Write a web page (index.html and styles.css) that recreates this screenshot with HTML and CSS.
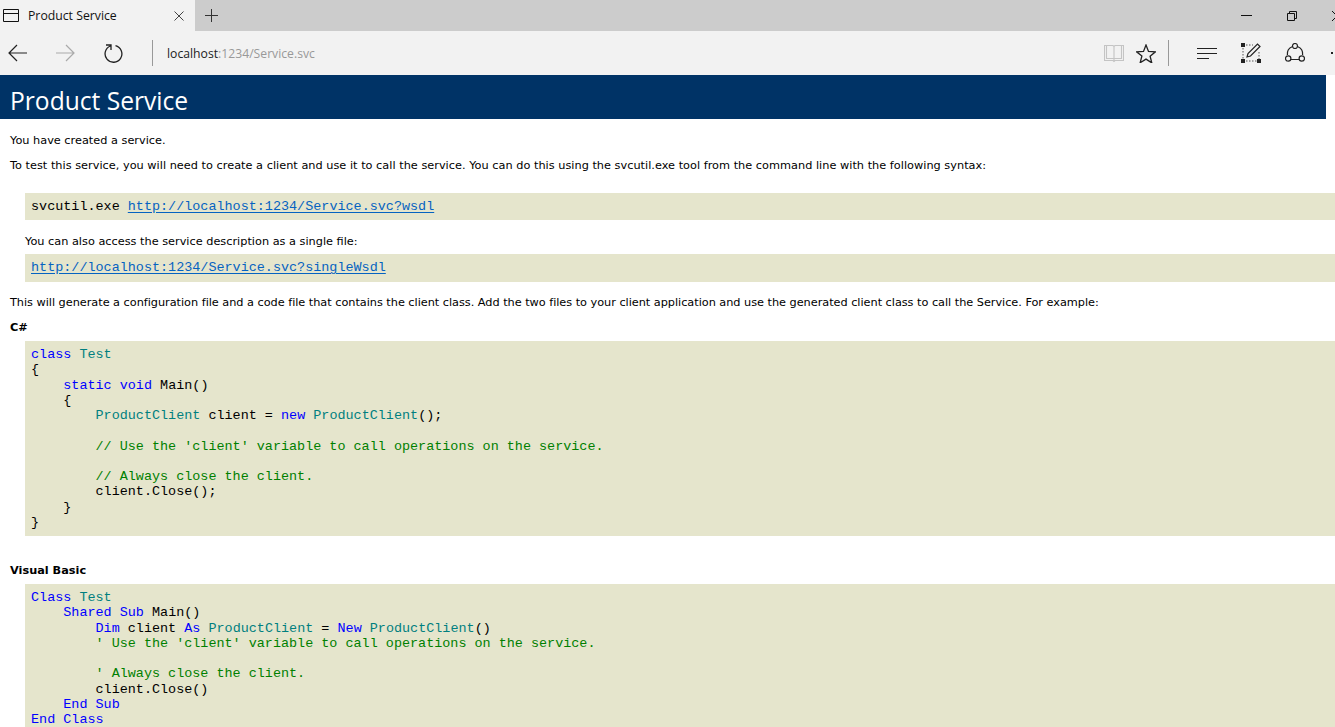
FILE: index.html
```html
<!DOCTYPE html>
<html lang="en">
<head>
<meta charset="utf-8">
<title>Product Service</title>
<link rel="stylesheet" href="styles.css">
</head>
<body>
<div class="chrome">
  <div class="tabbar">
    <div class="tab">
      <svg class="tab-page" width="16" height="13" viewBox="0 0 16 13"><path d="M.5.5h15v12H.5zM.5 4.500h15" fill="none" stroke="#111"/></svg>
      <span class="tab-title">Product Service</span>
      <svg class="tab-close" width="10" height="10" viewBox="0 0 10 10"><path d="M.5.5l9 9M9.500.5l-9 9" stroke="#444" fill="none"/></svg>
    </div>
    <svg class="tab-new" width="13" height="13" viewBox="0 0 13 13"><path d="M6.500 0v13M0 6.500h13" stroke="#333" fill="none"/></svg>
    <div class="winctl">
      <svg width="11" height="3" viewBox="0 0 11 3"><path d="M0 1.500h11" stroke="#111"/></svg>
      <svg class="win-restore" width="10" height="10" viewBox="0 0 10 10"><path d="M.5 2.500h7v7h-7zM2.500 2.500v-2h7v7h-2" fill="none" stroke="#111"/></svg>
      <svg class="win-close" width="6" height="10" viewBox="0 0 6 10"><path d="M0 0l5 5M0 10l5-5" fill="none" stroke="#111"/></svg>
    </div>
  </div>
  <div class="navbar">
    <svg class="nav-back" width="19" height="18" viewBox="0 0 19 18"><path d="M19 9H1M9 1L1 9l8 8" fill="none" stroke="#222" stroke-width="1.200"/></svg>
    <svg class="nav-fwd" width="19" height="18" viewBox="0 0 19 18"><path d="M0 9h18M10 1l8 8-8 8" fill="none" stroke="#aaa" stroke-width="1.200"/></svg>
    <svg class="nav-reload" width="19" height="19" viewBox="0 0 19 19"><path d="M6.500 2A8.400 8.400 0 1 0 11.500 1.700M2 1h5v5" fill="none" stroke="#222" stroke-width="1.300"/></svg>
    <span class="nav-sep"></span>
    <span class="url"><span class="url-host">localhost</span>:1234/Service.svc</span>
    <div class="nav-right">
      <svg class="ic-book" width="20" height="19" viewBox="0 0 20 19"><path d="M.5 1.500h8.500l1 1 1-1h8.500v15h-8.500l-1 1-1-1H.5zM2.500 1.500v13h7.500M17.500 1.500v13H10M10 2.500v15" fill="none" stroke="#c4c4c4" stroke-width="1.100"/></svg>
      <svg class="ic-star" width="20" height="19" viewBox="0 0 20 19"><path d="M10 1l2.500 6.400 6.900.4-5.300 4.400 1.700 6.700L10 15.100 4.200 18.700l1.700-6.700L.6 7.800l6.900-.4z" fill="none" stroke="#222" stroke-width="1.300"/></svg>
      <span class="nav-sep nav-sep-right"></span>
      <svg class="ic-hub" width="20" height="11" viewBox="0 0 20 11"><path d="M0 .5h20M0 5.500h20M0 10.500h12" fill="none" stroke="#222"/></svg>
      <svg class="ic-note" width="20" height="20" viewBox="0 0 20 20"><path d="M2 2h10M2 18h16M2 2v16M18 9v9" fill="none" stroke="#555" stroke-dasharray="1.500 1.500"/><path d="M0 0h4v4H0zM0 16h4v4H0zM16 16h4v4h-4z" fill="#222"/><path d="M6 14l1-3.500L16.500 1 19 3.500 9.500 13z" fill="#f2f2f2" stroke="#222" stroke-width="1.200"/></svg>
      <svg class="ic-share" width="20" height="20" viewBox="0 0 20 20"><path d="M7 3.800A8 8 0 0 0 2.400 12M13 3.800A8 8 0 0 1 17.600 12M6 16.500h8" fill="none" stroke="#222" stroke-width="1.200"/><circle cx="10" cy="3" r="2.500" fill="none" stroke="#222" stroke-width="1.200"/><circle cx="3.200" cy="15.500" r="2.700" fill="none" stroke="#222" stroke-width="1.200"/><circle cx="16.800" cy="15.500" r="2.700" fill="none" stroke="#222" stroke-width="1.200"/></svg>
      <span class="ic-dot"></span>
    </div>
  </div>
</div>
<main class="page">
  <h1 class="heading">Product Service</h1>
  <div class="content">
    <p class="intro">You have created a service.</p>
    <p class="para para-wide">To test this service, you will need to create a client and use it to call the service. You can do this using the svcutil.exe tool from the command line with the following syntax:</p>
    <pre class="code code-first">svcutil.exe <a href="#">http://localhost:1234/Service.svc?wsdl</a></pre>
    <p class="para indent">You can also access the service description as a single file:</p>
    <pre class="code code-link"><a href="#">http://localhost:1234/Service.svc?singleWsdl</a></pre>
    <p class="para after-link">This will generate a configuration file and a code file that contains the client class. Add the two files to your client application and use the generated client class to call the Service. For example:</p>
    <p class="label label-cs">C#</p>
    <pre class="code code-block"><span class="kw">class</span> <span class="ty">Test</span>
{
    <span class="kw">static</span> <span class="kw">void</span> Main()
    {
        <span class="ty">ProductClient</span> client = <span class="kw">new</span> <span class="ty">ProductClient</span>();

        <span class="cm">// Use the 'client' variable to call operations on the service.</span>

        <span class="cm">// Always close the client.</span>
        client.Close();
    }
}</pre>
    <p class="label label-vb">Visual Basic</p>
    <pre class="code code-block"><span class="kw">Class</span> <span class="ty">Test</span>
    <span class="kw">Shared</span> <span class="kw">Sub</span> Main()
        <span class="kw">Dim</span> client <span class="kw">As</span> <span class="ty">ProductClient</span> = <span class="kw">New</span> <span class="ty">ProductClient</span>()
        <span class="cm">' Use the 'client' variable to call operations on the service.</span>

        <span class="cm">' Always close the client.</span>
        client.Close()
    <span class="kw">End</span> <span class="kw">Sub</span>
<span class="kw">End</span> <span class="kw">Class</span></pre>
  </div>
</main>
</body>
</html>
```
FILE: styles.css
```css
html, body { margin: 0; padding: 0; height: 727px; overflow: hidden; background: #fff; }
body { font-family: "DejaVu Sans", Verdana, sans-serif; color: #000; width: 1335px; }
.chrome { background: #f2f2f2; height: 75px; font-family: "Open Sans", sans-serif; }
.tabbar { height: 31px; background: #ccc; display: flex; align-items: center; }
.tab { width: 195px; height: 31px; background: #f2f2f2; display: flex; align-items: center; padding-left: 3px; box-sizing: border-box; }
.tab-title { font-size: 12.25px; color: #111; margin-left: 9px; flex: 1; }
.tab-close { margin-right: 11px; }
.tab-new { margin-left: 10px; }
.winctl { margin-left: auto; margin-right: -3px; display: flex; align-items: center; }
.win-restore { margin-left: 35px; }
.win-close { margin-left: 35px; }
.navbar { height: 44px; display: flex; align-items: center; padding-left: 8px; }
.nav-fwd { margin-left: 29px; }
.nav-reload { margin-left: 29px; }
.nav-sep { width: 1px; height: 26px; background: #999; margin-left: 29px; }
.url { font-size: 12.2px; color: #999; margin-left: 14px; }
.url-host { color: #222; }
.nav-right { margin-left: auto; display: flex; align-items: center; }
.ic-star { margin-left: 12px; }
.nav-sep-right { margin-left: 12px; }
.ic-hub { margin-left: 28px; }
.ic-note { margin-left: 24px; }
.ic-share { margin-left: 24px; }
.ic-dot { width: 2px; height: 2px; background: #222; margin: 0 2px 0 26px; }
.page { font-size: 11.3px; }
.heading { margin: 0 9px 0 0; background: #003366; color: #fff; font-family: "Open Sans", sans-serif; font-weight: 400; font-size: 24.6px; line-height: 38px; height: 44px; box-sizing: border-box; padding: 7px 0 0 10px; }
.content { padding-left: 10px; }
p { margin: 0; line-height: 14px; }
.intro { margin-top: 15px; }
.para { margin-top: 11px; }
.para-wide { letter-spacing: 0.015px; }
.indent { margin-left: 15px; margin-top: 15px; }
.code { font-family: "Liberation Mono", "Courier New", monospace; font-size: 13.45px; line-height: 15.25px; background: #e5e5cc; margin: 0 0 0 15px; padding: 6px; color: #000; overflow: hidden; }
.code a { color: #0563c1; text-decoration: underline; text-underline-offset: 2px; }
.code-first { margin-top: 20px; }
.code-link { margin-top: 5px; }
.after-link { margin-top: 14px; letter-spacing: -0.03px; }
.label { font-weight: 700; }
.label-cs { margin-top: 11.500px; }
.label-vb { margin-top: 28px; }
.code-block { margin-top: 6px; }
.kw { color: #0000ff; }
.ty { color: #007f7f; }
.cm { color: #008000; }
```
